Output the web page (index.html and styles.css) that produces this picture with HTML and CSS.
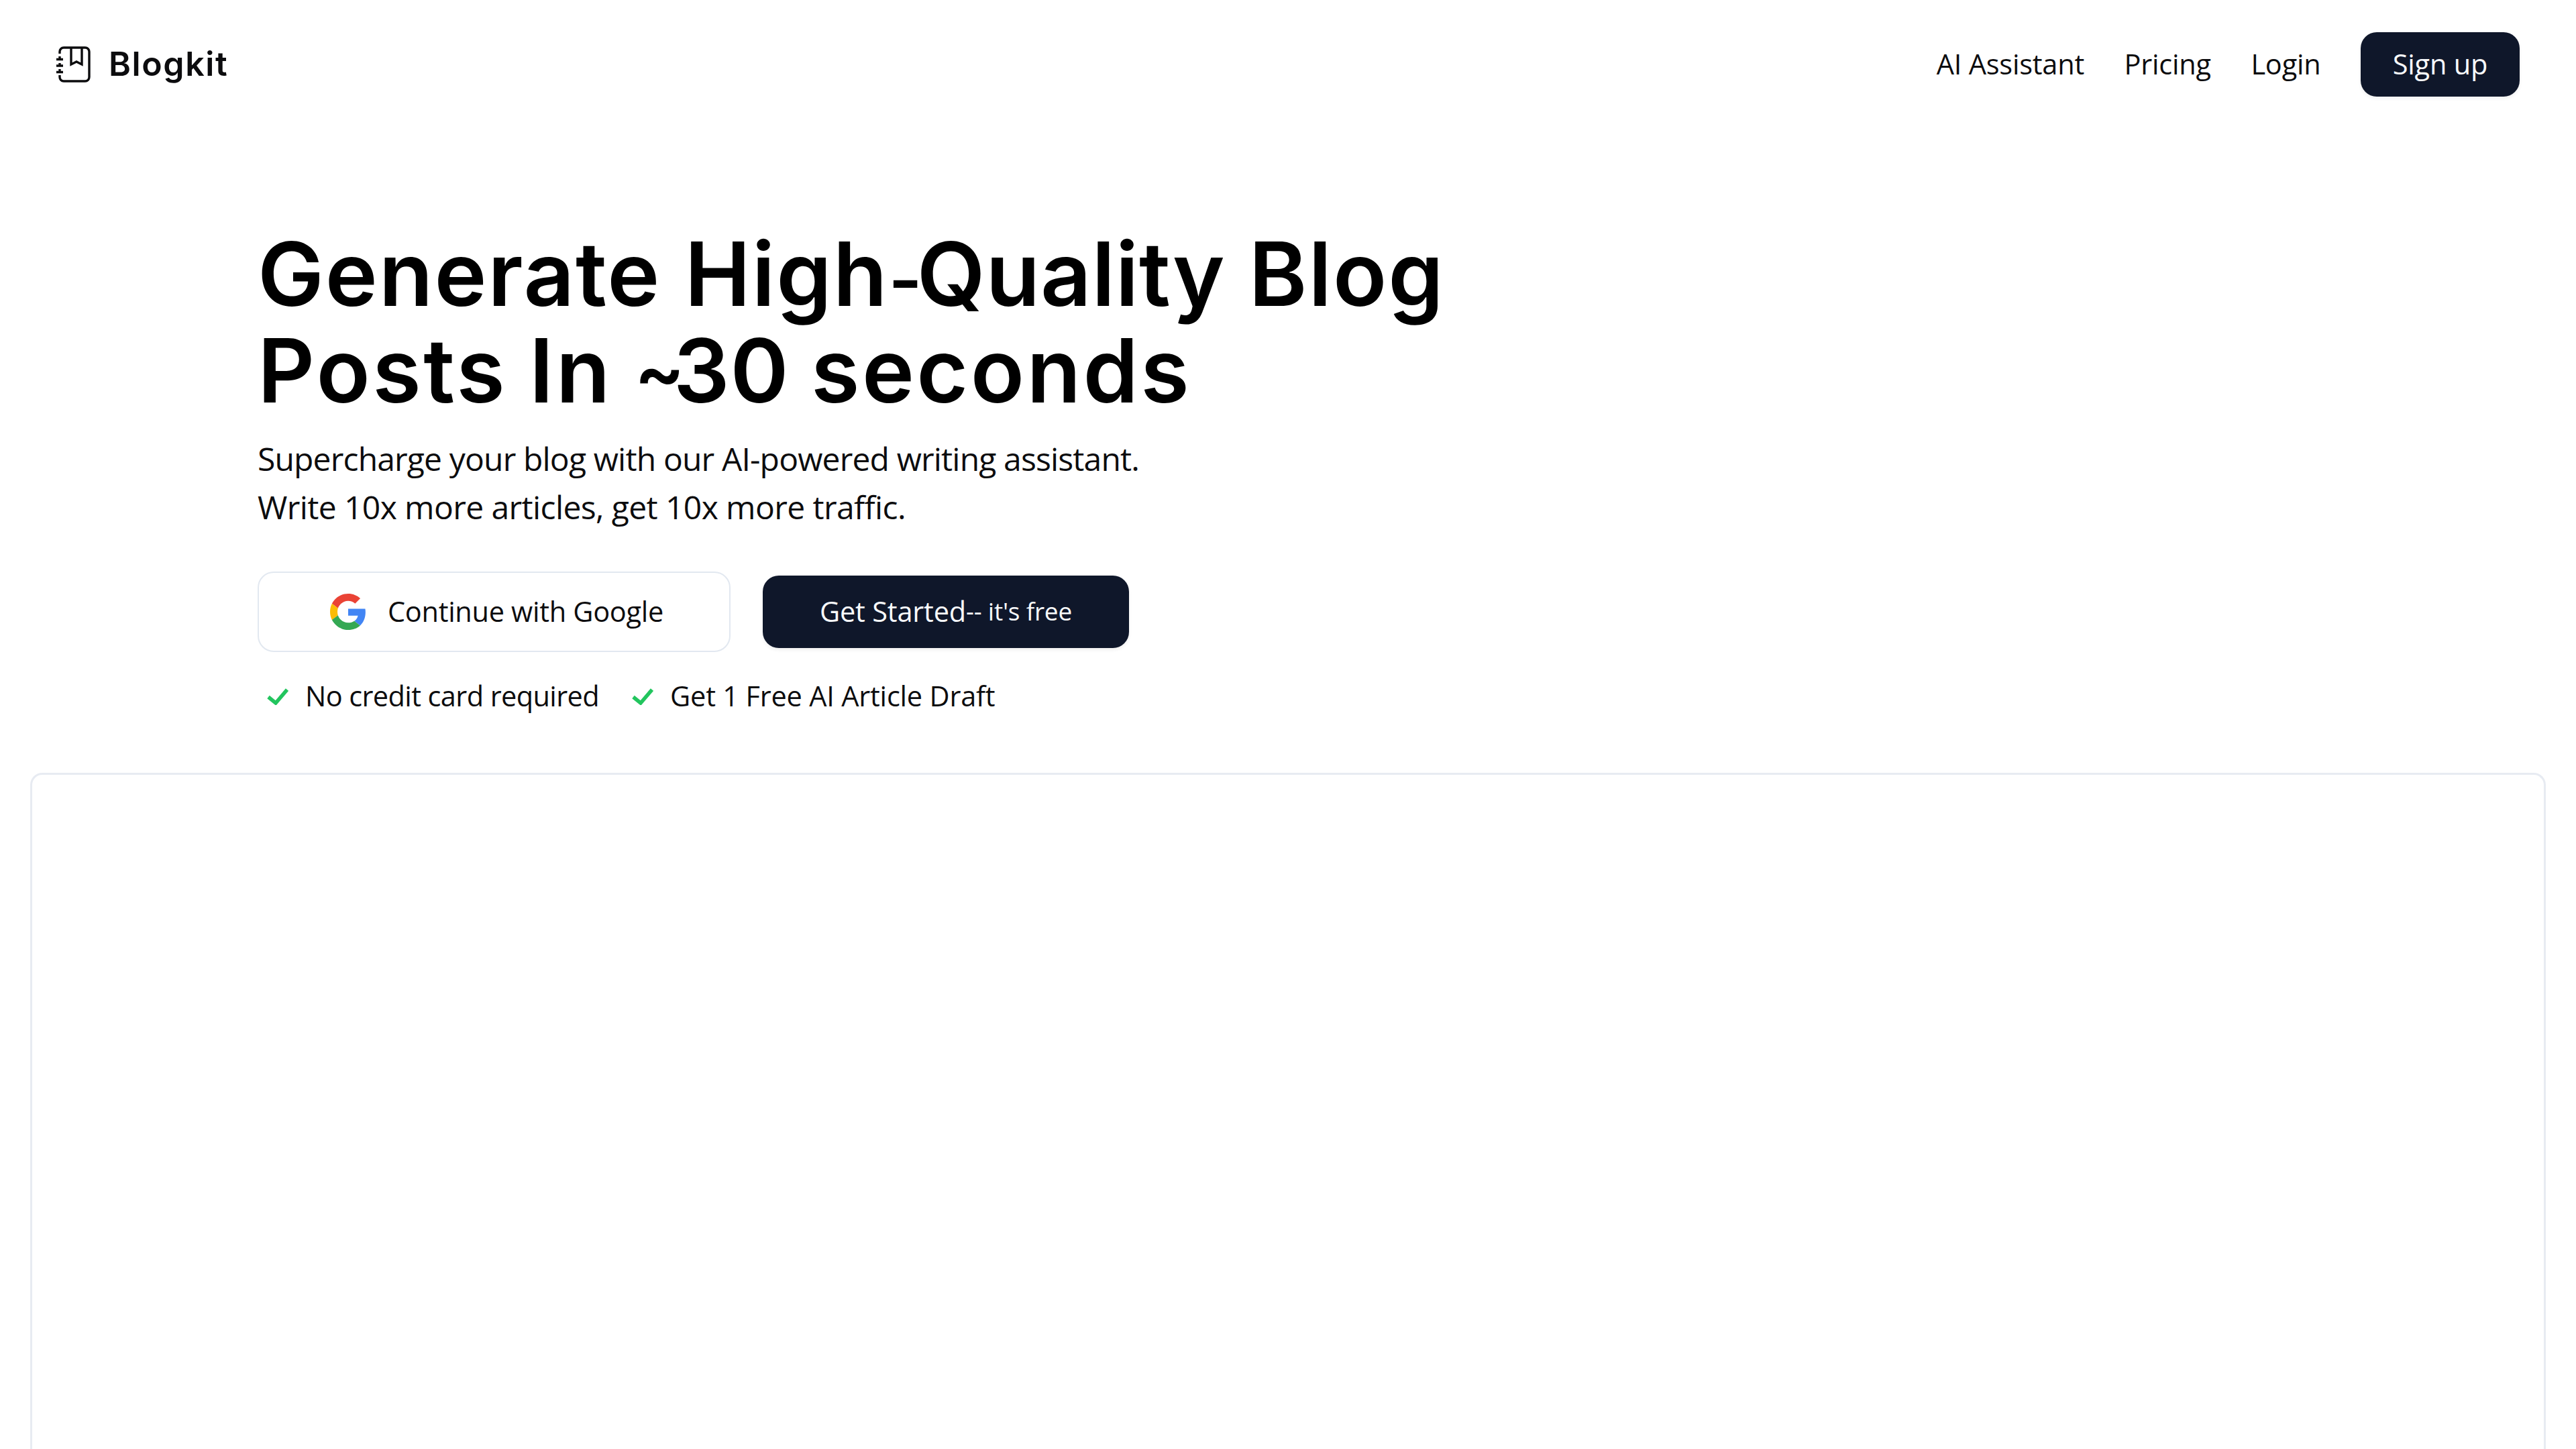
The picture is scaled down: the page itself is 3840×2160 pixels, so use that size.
FILE: index.html
```html
<!DOCTYPE html>
<html lang="en">
<head>
    <meta charset="utf-8">
    <title>Blogkit</title>
    <link rel="stylesheet" href="styles.css">
</head>
<body>
    <header class="header">
        <a class="logo">
            <svg class="logo-icon" viewBox="0 0 52 54" fill="none" stroke="currentColor" stroke-width="3.4">
                <path d="M6 11V8a6 6 0 0 1 6-6h32a6 6 0 0 1 6 6v38a6 6 0 0 1-6 6H12a6 6 0 0 1-6-6v-3" />
                <path d="M23 2v25l8-4 8 4V2" />
                <path d="M1 19.500h10M1 29h10M1 38.500h10" />
                <path d="M6 15v5M6 25v5M6 34v5" />
            </svg>
            <span class="logo-name">Blogkit</span>
        </a>
        <nav class="nav">
            <a class="nav-link">AI Assistant</a>
            <a class="nav-link">Pricing</a>
            <a class="nav-link">Login</a>
            <a class="button signup">Sign up</a>
        </nav>
    </header>

    <main class="main">
        <section class="hero">
            <h1>Generate High<span class="hyphen">-</span><span class="snug">Quality</span> Blog<br><span class="loose">Posts In <span class="tilde">~</span><span class="snug">30</span> seconds</span></h1>
            <p class="intro">Supercharge your blog with our AI-powered writing assistant.<br><span class="claim">Write 10x more articles, get 10x more traffic.</span></p>

            <div class="actions">
                <a class="google">
                    <svg class="google-icon" viewBox="0 0 48 48">
                        <path fill="#EA4335" d="M24 9.500c3.540 0 6.710 1.220 9.210 3.600l6.850-6.850C35.900 2.380 30.470 0 24 0 14.620 0 6.510 5.380 2.560 13.220l7.980 6.190C12.430 13.720 17.740 9.500 24 9.500z" />
                        <path fill="#4285F4" d="M46.980 24.550c0-1.570-.150-3.090-.380-4.550H24v9.020h12.940c-.580 2.960-2.260 5.480-4.780 7.180l7.730 6c4.510-4.180 7.090-10.360 7.090-17.650z" />
                        <path fill="#FBBC05" d="M10.530 28.590c-.480-1.450-.760-2.990-.760-4.590s.270-3.140.760-4.590l-7.980-6.190C.920 16.460 0 20.120 0 24c0 3.880.920 7.540 2.560 10.780l7.970-6.190z" />
                        <path fill="#34A853" d="M24 48c6.480 0 11.930-2.130 15.890-5.810l-7.730-6c-2.150 1.450-4.920 2.300-8.160 2.300-6.260 0-11.570-4.220-13.470-9.910l-7.980 6.190C6.510 42.620 14.620 48 24 48z" />
                    </svg>
                    <span class="google-label">Continue with Google</span>
                </a>
                <a class="button start">
                    <span>Get Started</span><span class="start-note">-- it's free</span>
                </a>
            </div>

            <ul class="perks">
                <li>
                    <svg class="check" viewBox="0 0 32 26"><path d="M2 14l11 9L30 3" /></svg>
                    <span class="perk card">No credit card required</span>
                </li>
                <li>
                    <svg class="check" viewBox="0 0 32 26"><path d="M2 14l11 9L30 3" /></svg>
                    <span class="perk">Get 1 Free AI Article Draft</span>
                </li>
            </ul>
        </section>

        <div class="preview"></div>
    </main>
</body>
</html>
```
FILE: styles.css
```css
* {
    box-sizing: border-box;
}

body {
    display: flex;
    flex-direction: column;
    margin: 0;
    height: 100vh;
    background: #fff;
    color: #0c0c0e;
    font-family: "Open Sans", "Noto Sans", sans-serif;
    font-size: 41.5px;
    letter-spacing: -0.2px;
    line-height: 60px;
    white-space: nowrap;
}

/* Header */
.header {
    display: flex;
    align-items: center;
    justify-content: space-between;
    height: 192px;
    padding: 0 84px 0 83px;
}

.logo {
    display: flex;
    align-items: center;
    gap: 27px;
}

.logo-icon {
    width: 52px;
    height: 54px;
}

.logo-name {
    padding-bottom: 2px;
    font-family: Inter, sans-serif;
    font-size: 50px;
    font-weight: 600;
    letter-spacing: 1.6px;
}

.nav {
    display: flex;
    align-items: center;
}

.nav-link {
    margin-right: 59.5px;
    padding-bottom: 3px;
}

.button {
    display: flex;
    align-items: center;
    justify-content: center;
    padding-bottom: 3px;
    border-radius: 24px;
    background: #0f172a;
    box-shadow: 0 3px 5px rgba(0, 0, 0, 0.06);
    color: #f8fafc;
}

.signup {
    width: 237px;
    height: 96px;
}

/* Hero */
.hero {
    padding: 144px 384px 0;
}

h1 {
    margin: 0;
    color: #000;
    font-family: Inter, sans-serif;
    font-size: 132px;
    font-weight: 600;
    letter-spacing: 1.9px;
    line-height: 144px;
}

.loose {
    letter-spacing: 3.4px;
    word-spacing: -4px;
}

.snug {
    letter-spacing: 0.7px;
}

.hyphen {
    font-size: 108px;
    letter-spacing: -8px;
    line-height: 0;
}

.tilde {
    font-size: 112px;
    letter-spacing: -17px;
    line-height: 0;
    vertical-align: 6px;
}

.intro {
    margin: 24px 0 0;
    font-size: 48px;
    letter-spacing: -0.84px;
    line-height: 72px;
}

.claim {
    letter-spacing: -0.6px;
}

.actions {
    display: flex;
    align-items: center;
    gap: 48px;
    margin-top: 60px;
}

.google {
    display: flex;
    align-items: center;
    width: 705px;
    height: 120px;
    padding-left: 106px;
    border: 2px solid #e2e8f0;
    border-radius: 24px;
}

.google-icon {
    width: 54px;
    height: 54px;
    margin-right: 32px;
}

.google-label {
    padding-bottom: 3px;
    letter-spacing: -0.3px;
}

.start {
    width: 546px;
    height: 108px;
}

.start-note {
    font-size: 37px;
}

.perks {
    display: flex;
    gap: 49px;
    height: 60px;
    margin: 36px 0 0;
    padding: 0 0 0 14px;
    list-style: none;
}

.perks li {
    display: flex;
    align-items: center;
    gap: 25px;
}

.perk {
    padding-bottom: 3px;
}

.card {
    letter-spacing: -0.6px;
}

.check {
    width: 32px;
    height: 26px;
    fill: none;
    stroke: #22c55e;
    stroke-width: 5.5;
}

/* Preview frame, runs to the bottom of the window */
.main {
    display: flex;
    flex: 1;
    flex-direction: column;
}

.preview {
    flex: 1;
    margin: 84px 45px 0;
    border: 3px solid #e7ebf2;
    border-bottom: 0;
    border-radius: 18px 18px 0 0;
}
```
